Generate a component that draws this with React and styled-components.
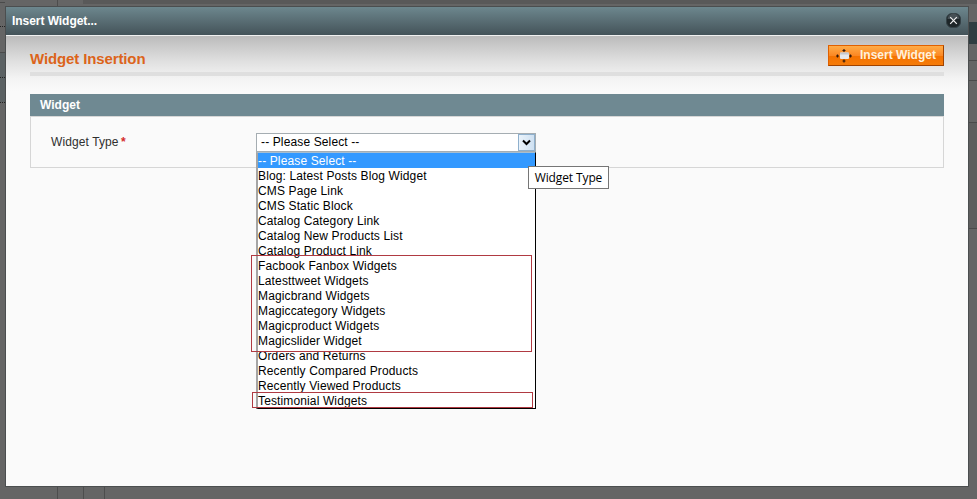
import React from "react";
import styled, { createGlobalStyle } from "styled-components";

const Global = createGlobalStyle`
  * { box-sizing: border-box; }
  html, body { margin: 0; padding: 0; overflow: hidden; }
  body { font: 12px/15px "Liberation Sans", Arial, sans-serif; color: #000; }
`;

const Page = styled.div`
  display: grid;
  grid-template-columns: 5px 964px 1fr;
  width: 977px;
  height: 499px;
  background: #656565;
  overflow: hidden;
`;

const Center = styled.div`
  display: flex;
  flex-direction: column;
`;

const Gutter = styled.div`
  display: flex;
  flex-direction: column;
`;

const GutterCell = styled.div`
  height: ${(p) => p.$h}px;
  flex: none;
  background: ${(p) => p.$fill || "transparent"};
  border-top: ${(p) => (p.$line ? `1px ${p.$line} ${p.$line === "dotted" ? "#222" : "#4a4a4a"}` : "0")};
`;

const Strip = styled.div`
  display: grid;
  grid-template-columns: ${(p) => p.$columns};
  height: ${(p) => p.$h}px;
  flex: none;
`;

const StripCell = styled.div`
  border-right: ${(p) => (p.$edge ? "1px solid #4d4d4d" : "0")};
  border-top: ${(p) => (p.$cap ? "4px solid #595959" : "0")};
`;

const Dialog = styled.section`
  display: flex;
  flex-direction: column;
  height: 481px;
  flex: none;
  border: 1px solid #4b4e4f;
  background: #fafafa;
`;

const TitleBar = styled.header`
  display: flex;
  justify-content: space-between;
  align-items: center;
  height: 28px;
  flex: none;
  padding: 0 7px 0 6px;
  background: linear-gradient(#6d878e, #445359);
  color: #fff;
  font-weight: bold;
  letter-spacing: -0.05px;
`;

const CloseButton = styled.button`
  display: flex;
  width: 15px;
  height: 15px;
  margin-bottom: 2px;
  padding: 0;
  border: 0;
  background: none;
`;

const Body = styled.div`
  flex: 1;
  padding: 9px 24px 0 24px;
  border-top: 1px solid #f0f0f0;
  background: linear-gradient(#bbb 0, #dedede 24px, #f3f3f3 42px, #fafafa 56px);
`;

const Heading = styled.div`
  display: flex;
  justify-content: space-between;
  height: 31px;
  border-bottom: 4px solid #dfdfdf;
`;

const Title = styled.h1`
  margin: 5px 0 0;
  color: #dc641a;
  font-size: 15px;
  line-height: 18px;
  letter-spacing: -0.12px;
`;

const InsertButton = styled.button`
  display: flex;
  align-items: center;
  gap: 7px;
  width: 116px;
  height: 21px;
  padding: 0 0 1px 7px;
  border: 1px solid #e06000;
  border-right-color: #a04300;
  border-bottom-color: #a04300;
  background: linear-gradient(#ffac47, #fb8824 50%, #f47200 51%, #f57c0a);
  color: #fff1dc;
  font: bold 12px/15px "Liberation Sans", Arial, sans-serif;
  white-space: nowrap;
`;

const Fieldset = styled.section`
  margin-top: 18px;
`;

const Legend = styled.h2`
  height: 22px;
  margin: 0;
  padding-left: 10px;
  background: #6f8992;
  color: #fff;
  font-size: 12px;
  line-height: 22px;
`;

const FieldRow = styled.div`
  display: flex;
  height: 52px;
  padding: 16px 0 0 20px;
  border: 1px solid #d6d6d6;
`;

const Label = styled.label`
  width: 205px;
  padding-top: 1px;
  line-height: 17px;
  color: #2f2f2f;
  letter-spacing: 0.1px;
`;

const Required = styled.span`
  color: #d42b2b;
  font-weight: bold;
  margin-left: -1px;
`;

const SelectWrap = styled.div`
  position: relative;
  width: 280px;
`;

const SelectBox = styled.div`
  display: flex;
  justify-content: space-between;
  height: 19px;
  padding-left: 4px;
  border: 1px solid #a5adb2;
  background: #fff;
  line-height: 17px;
  letter-spacing: 0.13px;
`;

const Arrow = styled.span`
  display: flex;
  align-items: center;
  justify-content: center;
  width: 17px;
  height: 17px;
  border: 1px solid #8fb0cd;
  background: linear-gradient(90deg, #eaf3fb, #cfe1f2);
`;

const Options = styled.ul`
  position: absolute;
  top: 100%;
  left: 0;
  width: 280px;
  height: 257px;
  margin: 0;
  padding: 0;
  list-style: none;
  border: solid #000;
  border-width: 1px 1px 1px 2px;
  border-left-color: #a5a5a5;
  border-top-color: #a7bed0;
  background: #fff;
`;

const DropArea = styled.div`
  position: relative;
  height: 19px;
`;

const Option = styled.li`
  height: 15px;
  white-space: pre;
  line-height: 16px;
  letter-spacing: 0.13px;
  color: ${(p) => (p.$active ? "#fff" : "#000")};
  background: ${(p) => (p.$active ? "#3399ff" : "transparent")};
`;

const Highlight = styled.div`
  position: absolute;
  left: ${(p) => p.$x}px;
  top: ${(p) => p.$y}px;
  width: 281px;
  height: ${(p) => p.$h}px;
  border: 1px solid #b03a42;
`;

const Tooltip = styled.div`
  position: absolute;
  left: 272px;
  top: 33px;
  width: 81px;
  height: 23px;
  border: 1px solid #767676;
  background: #fff;
  font: 12px/22px "Open Sans", "Noto Sans", sans-serif;
  letter-spacing: -0.12px;
  text-align: center;
  white-space: nowrap;
`;

const options = [
  "-- Please Select --",
  "Blog: Latest Posts Blog Widget",
  "CMS Page Link",
  "CMS Static Block",
  "Catalog Category Link",
  "Catalog New Products List",
  "Catalog Product Link",
  "Facbook Fanbox Widgets",
  "Latesttweet Widgets",
  "Magicbrand Widgets",
  "Magiccategory Widgets",
  "Magicproduct Widgets",
  "Magicslider Widget",
  "Orders and Returns",
  "Recently Compared Products",
  "Recently Viewed Products",
  "Testimonial Widgets",
];

const leftCells = [
  { h: 2 },
  { h: 24, line: "solid" },
  { h: 26, line: "dotted" },
  { h: 25, line: "solid", fill: "#5b6163" },
  { h: 25, line: "dotted", fill: "#5b6163" },
  { h: 397, line: "dotted" },
];

const rightCells = [
  { h: 4, fill: "#595959" },
  { h: 18 },
  { h: 22, fill: "#303d41" },
  { h: 16 },
  { h: 20, line: "solid" },
  { h: 42, line: "solid" },
  { h: 106, line: "solid", fill: "#5e5e5e" },
  { h: 271, line: "solid" },
];

const GutterColumn = ({ cells }) => (
  <Gutter>
    {cells.map((c, i) => (
      <GutterCell key={i} $h={c.h} $line={c.line} $fill={c.fill} />
    ))}
  </Gutter>
);

const CloseIcon = () => (
  <svg width="15" height="15" viewBox="0 0 15 15">
    <rect x="0.5" y="0.5" width="14" height="14" rx="5.5" fill="#1d2528" stroke="#344146" />
    <path d="M1.5 6a5 4.5 0 0 1 12 0z" fill="#465055" />
    <path d="M4.2 4.2l6.6 6.6M10.8 4.2l-6.6 6.6" stroke="#f2f2f2" strokeWidth="1.2" />
  </svg>
);

const InsertIcon = () => (
  <svg width="17" height="15" viewBox="0 0 17 15">
    <rect x="4" y="4.5" width="9" height="6.5" rx="1" fill="#e7e9ec" />
    <path d="M4 5.5q0-1 1-1h7q1 0 1 1v1H4z" fill="#c5c8ce" />
    <path
      d="M8 1v3M6.5 2.5h3M8 11.5v3M6.5 13h3M0 8h3M1.5 6.5v3M13 8h3M14.5 6.5v3"
      fill="none"
      stroke="#34190a"
      strokeWidth="1.2"
    />
  </svg>
);

export default function App() {
  return (
    <>
      <Global />
      <Page>
        <GutterColumn cells={leftCells} />
        <Center>
          <Strip $h={6} $columns="53px 25px 1fr">
            <StripCell $edge />
            <StripCell />
            <StripCell $cap />
          </Strip>
          <Dialog>
            <TitleBar>
              Insert Widget...
              <CloseButton aria-label="Close"><CloseIcon /></CloseButton>
            </TitleBar>
            <Body>
              <Heading>
                <Title>Widget Insertion</Title>
                <InsertButton><InsertIcon />Insert Widget</InsertButton>
              </Heading>
              <Fieldset>
                <Legend>Widget</Legend>
                <FieldRow>
                  <Label>Widget Type <Required>*</Required></Label>
                  <SelectWrap>
                    <DropArea>
                      <SelectBox>
                        -- Please Select --
                        <Arrow>
                          <svg width="9" height="7" viewBox="0 0 9 7">
                            <path d="M1 1.5l3.5 3.5L8 1.5" fill="none" stroke="#000" strokeWidth="2" />
                          </svg>
                        </Arrow>
                      </SelectBox>
                      <Options>
                        {options.map((o, i) => (
                          <Option key={o} $active={i === 0}>{o}</Option>
                        ))}
                      </Options>
                    </DropArea>
                    <Highlight $x={-5} $y={122} $h={97} />
                    <Highlight $x={-4} $y={259} $h={16} />
                    <Tooltip>Widget Type</Tooltip>
                  </SelectWrap>
                </FieldRow>
              </Fieldset>
            </Body>
          </Dialog>
          <Strip $h={12} $columns="53px 26px 21px 1fr">
            <StripCell $edge />
            <StripCell $edge />
            <StripCell $edge />
            <StripCell />
          </Strip>
        </Center>
        <GutterColumn cells={rightCells} />
      </Page>
    </>
  );
}
